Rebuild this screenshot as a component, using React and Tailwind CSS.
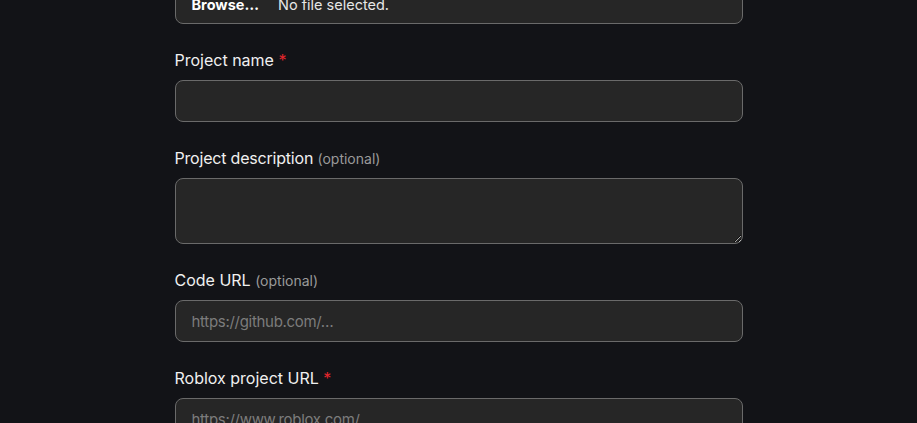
export default function App() {
  const font = { fontFamily: "Inter, 'Noto Sans', sans-serif" };
  return (
    <div className="min-h-[423px] h-[423px] overflow-hidden bg-[#121317] text-[#f0f0f0]" style={font}>
      <div className="mx-auto w-[568px] -mt-[18px] flex flex-col">
        <div className="flex h-[42px] items-center rounded-lg border border-[#6a6a6a] bg-[#262626] px-4 pt-[3px] text-[14.5px]">
          <span className="font-bold text-white">Browse…</span>
          <span className="ml-[19px] text-[#e6e6e6]">No file selected.</span>
        </div>

        <label className="mt-6 mb-2 text-base leading-6">
          Project name <span className="text-[#e5262c]">*</span>
        </label>
        <input className="h-[42px] rounded-lg border border-[#6a6a6a] bg-[#262626] px-4 outline-none" />

        <label className="mt-6 mb-2 text-base leading-6 tracking-[-0.2px]">
          Project description <span className="text-sm tracking-normal text-[#9a9a9a]">(optional)</span>
        </label>
        <textarea className="h-[66px] rounded-lg border border-[#6a6a6a] bg-[#262626] px-4 py-2 outline-none" />

        <label className="mt-6 mb-2 text-base leading-6">
          Code URL <span className="text-sm text-[#9a9a9a]">(optional)</span>
        </label>
        <input
          placeholder="https://github.com/…"
          className="h-[42px] rounded-lg border border-[#6a6a6a] bg-[#262626] px-4 text-[15px] tracking-[-0.3px] outline-none placeholder:text-[#7c7c7c]"
        />

        <label className="mt-6 mb-2 text-base leading-6">
          Roblox project URL <span className="text-[#e5262c]">*</span>
        </label>
        <input
          placeholder="https://www.roblox.com/…"
          className="h-[42px] rounded-lg border border-[#6a6a6a] bg-[#262626] px-4 text-[15px] tracking-[-0.3px] outline-none placeholder:text-[#7c7c7c]"
        />
      </div>
    </div>
  );
}
